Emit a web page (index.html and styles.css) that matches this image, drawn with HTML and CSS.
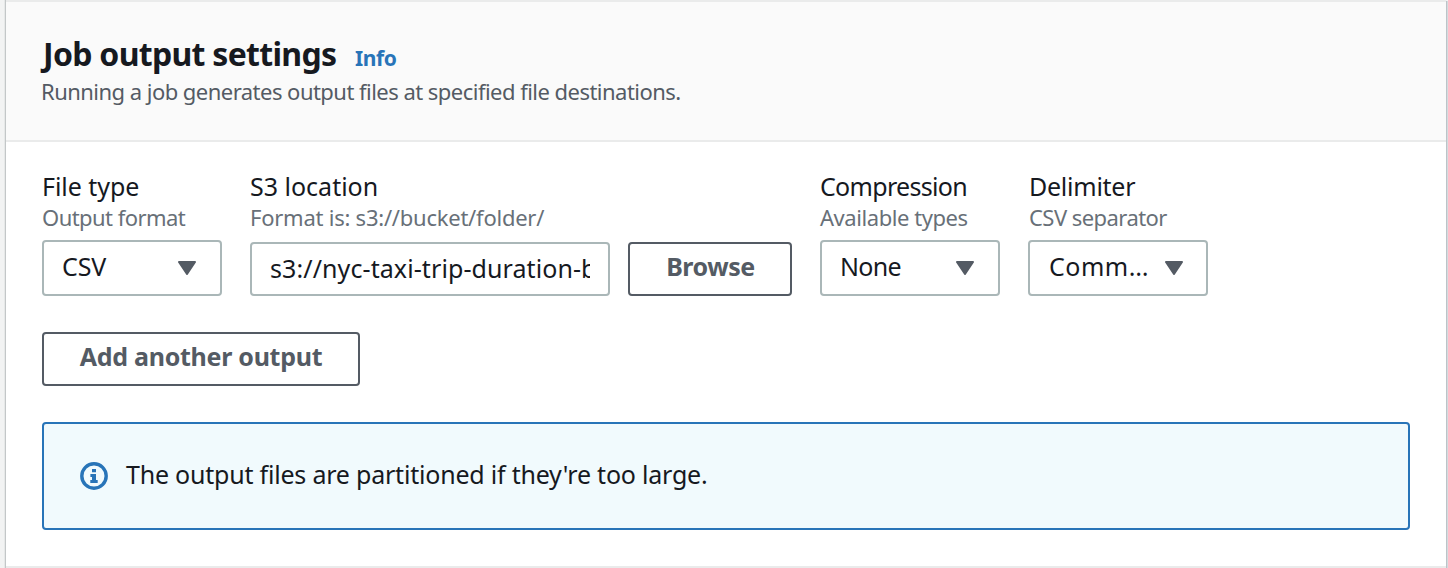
FILE: index.html
```html
<!DOCTYPE html>
<html lang="en">
<head>
<meta charset="utf-8">
<title>Job output settings</title>
<link rel="stylesheet" href="styles.css">
</head>
<body>
<section class="panel">
  <header class="panel-header">
    <div class="title-row">
      <h2 class="title">Job output settings</h2>
      <a class="info">Info</a>
    </div>
    <p class="description">Running a job generates output files at specified file destinations.</p>
  </header>
  <div class="panel-body">
    <div class="fields">
      <div class="field">
        <div class="label label-type">File type</div>
        <div class="hint hint-tight">Output format</div>
        <div class="select"><span class="value">CSV</span><svg class="caret" viewBox="0 0 20 14"><path d="M2 1h16L10 13z"/></svg></div>
      </div>
      <div class="field field-location">
        <div class="label label-location">S3 location</div>
        <div class="hint hint-location">Format is: s3://bucket/folder/</div>
        <div class="location-row">
          <div class="input"><span class="input-text">s3://nyc-taxi-trip-duration-b</span></div>
          <button class="button button-browse">Browse</button>
        </div>
      </div>
      <div class="field">
        <div class="label label-compression">Compression</div>
        <div class="hint">Available types</div>
        <div class="select"><span class="value value-none">None</span><svg class="caret" viewBox="0 0 20 14"><path d="M2 1h16L10 13z"/></svg></div>
      </div>
      <div class="field field-delimiter">
        <div class="label label-delimiter">Delimiter</div>
        <div class="hint hint-tight">CSV separator</div>
        <div class="select"><span class="value value-comma">Comm…</span><svg class="caret" viewBox="0 0 20 14"><path d="M2 1h16L10 13z"/></svg></div>
      </div>
    </div>
    <button class="button button-add">Add another output</button>
    <div class="alert">
      <svg class="alert-icon" viewBox="0 0 28 28"><circle cx="14" cy="14" r="12.2"/><path d="M12 7h4v3.2h-4zM10.4 12H16v6h1.7v3h-7.4v-3H12v-3h-1.600z"/></svg>
      <span class="alert-text">The output files are partitioned if they're too large.</span>
    </div>
  </div>
</section>
</body>
</html>
```
FILE: styles.css
```css
* { box-sizing: border-box; }
body {
  margin: 0;
  height: 568px;
  overflow: hidden;
  padding: 0 2px 0 6px;
  background: #f2f3f3;
  font-family: "Noto Sans", "Open Sans", sans-serif;
  font-size: 25px;
  line-height: 30px;
  color: #16191f;
  white-space: nowrap;
}
.panel {
  height: 568px;
  background: #fff;
  border-top: 2px solid #eaebeb;
  border-bottom: 2px solid #eaebeb;
  box-shadow: -1px 0 0 #c3c7c8, -2px 0 0 #e6e8e8, 1px 1px 0 #bcc3c8, 2px 1px 0 #d5dbde;
}
.panel-header {
  height: 140px;
  padding: 32px 36px 0 35px;
  background: #fafafa;
  border-bottom: 2px solid #eaebeb;
}
.title-row { display: flex; align-items: baseline; gap: 18px; }
.title {
  margin: 0;
  width: 296px;
  padding-left: 2px;
  font-size: 32px;
  line-height: 40px;
  letter-spacing: -0.7px;
}
.info { font-size: 21px; font-weight: 700; letter-spacing: -0.4px; color: #2874b8; }
.description {
  margin: 2px 0 0;
  font-size: 22px;
  letter-spacing: -0.53px;
  color: #545b64;
}
.panel-body { padding: 29px 36px 0; }
.fields { display: flex; gap: 28px; }
.field { width: 180px; }
.field-location { width: 542px; }
.label-type { letter-spacing: -0.05px; }
.label-location { letter-spacing: 0; }
.label-compression { letter-spacing: -0.7px; }
.label-delimiter { letter-spacing: -0.25px; }
.hint {
  margin-top: 1px;
  font-size: 22px;
  letter-spacing: -0.44px;
  color: #687078;
}
.hint-tight { letter-spacing: -0.55px; }
.hint-location { letter-spacing: -0.24px; }
.field-delimiter .label, .field-delimiter .hint { padding-left: 1px; }
.select {
  display: flex;
  align-items: center;
  justify-content: space-between;
  height: 56px;
  margin-top: 8px;
  padding: 0 23px 0 18px;
  border: 2px solid #aab7b8;
  border-radius: 4px;
}
.field-delimiter .select { padding: 0 22px 0 19px; }
.value { padding-bottom: 4px; letter-spacing: -0.1px; }
.value-none { letter-spacing: -0.7px; }
.value-comma { letter-spacing: 0.5px; }
.caret {
  flex: none;
  width: 20px;
  height: 14px;
  fill: #545b64;
  stroke: #545b64;
  stroke-width: 2;
  stroke-linejoin: round;
}
.location-row { display: flex; gap: 18px; margin-top: 10px; }
.input {
  display: flex;
  align-items: center;
  width: 360px;
  height: 54px;
  padding: 0 18px 2px;
  border: 2px solid #aab7b8;
  border-radius: 4px;
}
.input-text { overflow: hidden; line-height: 40px; letter-spacing: 0.09px; }
.button {
  display: block;
  height: 54px;
  padding: 0 0 6px;
  border: 2px solid #545b64;
  border-radius: 4px;
  background: #fff;
  color: #545b64;
  font: 700 25px/30px "Noto Sans", "Open Sans", sans-serif;
  letter-spacing: -0.28px;
}
.button-browse { width: 164px; padding-left: 1px; letter-spacing: -0.45px; }
.button-add { width: 318px; margin-top: 36px; }
.alert {
  display: flex;
  align-items: center;
  gap: 18px;
  height: 108px;
  margin-top: 36px;
  padding: 0 36px;
  border: 2px solid #2874b8;
  border-radius: 4px;
  background: #f1fafd;
}
.alert-icon { width: 28px; height: 28px; fill: #2874b8; }
.alert-icon circle { fill: none; stroke: #2874b8; stroke-width: 3.4; }
.alert-text { padding-bottom: 4px; letter-spacing: -0.21px; }
```
